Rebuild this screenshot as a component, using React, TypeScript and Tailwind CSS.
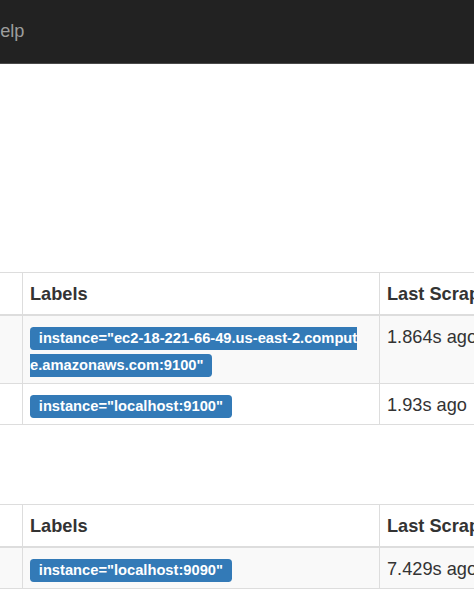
import React from "react";

const font = { fontFamily: '"Liberation Sans", Arial, Helvetica, sans-serif' };

function Badge({ children }: { children: React.ReactNode }) {
  return (
    <span className="inline bg-[#337ab7] text-white font-bold text-[14.7px] leading-none px-[0.6em] pt-[0.2em] pb-[0.3em] rounded-[0.25em] break-all">
      {children}
    </span>
  );
}

function Row({
  labels,
  last,
  striped,
}: {
  labels: string;
  last: string;
  striped?: boolean;
}) {
  return (
    <div
      className={`flex border-b border-[#dddddd] text-[18.2px] leading-[27px] text-[#333333] ${
        striped ? "bg-[#f9f9f9]" : "bg-white"
      }`}
    >
      <div className="w-[22px] shrink-0" />
      <div className="w-[357px] shrink-0 border-l border-[#dddddd] pl-[7px] pr-[18px] pt-[8px] pb-[5px]">
        <Badge>{labels}</Badge>
      </div>
      <div className="w-[220px] shrink-0 border-l border-[#dddddd] pl-[7px] pt-[8px] pb-[5px] whitespace-nowrap">
        {last}
      </div>
    </div>
  );
}

function Table({ rows }: { rows: { labels: string; last: string }[] }) {
  return (
    <div className="border-t border-[#dddddd]">
      <div className="flex border-b-2 border-[#dddddd] text-[18.2px] leading-[27px] font-bold text-[#333333]">
        <div className="w-[22px] shrink-0" />
        <div className="w-[357px] shrink-0 border-l border-[#dddddd] pl-[7px] pr-[7px] pt-[8px] pb-[6px]">
          Labels
        </div>
        <div className="w-[220px] shrink-0 border-l border-[#dddddd] pl-[7px] pt-[8px] pb-[6px] whitespace-nowrap">
          Last Scrape
        </div>
      </div>
      {rows.map((r, i) => (
        <Row key={i} labels={r.labels} last={r.last} striped={i % 2 === 0} />
      ))}
    </div>
  );
}

export default function App() {
  return (
    <div className="w-[474px] h-[606px] overflow-hidden bg-white" style={font}>
      <div className="h-[64px] bg-[#222222] border-b border-[#4a4a4a]">
        <div className="pt-[18px] text-[18.2px] leading-[26px] text-[#9d9d9d] whitespace-nowrap ml-[-13px]">
          Help
        </div>
      </div>
      <div className="mt-[208px]">
        <Table
          rows={[
            {
              labels: 'instance="ec2-18-221-66-49.us-east-2.compute.amazonaws.com:9100"',
              last: "1.864s ago",
            },
            { labels: 'instance="localhost:9100"', last: "1.93s ago" },
          ]}
        />
      </div>
      <div className="mt-[79px]">
        <Table rows={[{ labels: 'instance="localhost:9090"', last: "7.429s ago" }]} />
      </div>
    </div>
  );
}
